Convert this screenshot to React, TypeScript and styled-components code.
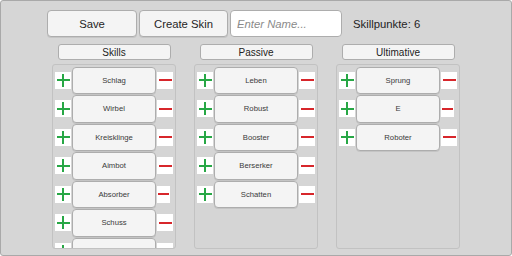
import React from "react";
import styled, { createGlobalStyle } from "styled-components";

const Global = createGlobalStyle`
  html, body { margin: 0; padding: 0; background: #ffffff; }
  body { font-family: "Liberation Sans", Arial, sans-serif; }
  * { box-sizing: border-box; }
`;

const Frame = styled.div`
  width: 512px;
  height: 256px;
  background: #d6d6d6;
  border: 1px solid #a9a9a9;
  border-radius: 3px;
  padding: 9px 0 0 46px;
  overflow: hidden;
`;

const TopBar = styled.div`
  display: flex;
  align-items: center;
  gap: 2px;
  height: 27px;
`;

const ActionButton = styled.button<{ $w: number }>`
  width: ${(p) => p.$w}px;
  height: 27px;
  padding: 0;
  background: #f4f4f4;
  border: 1px solid #adadad;
  border-radius: 4px;
  box-shadow: 0 1px 0 rgba(0, 0, 0, 0.08);
  font-family: "Liberation Sans", Arial, sans-serif;
  font-size: 11.3px;
  color: #1f1f1f;
`;

const NameInput = styled.input`
  width: 112px;
  height: 27px;
  padding: 0 0 0 6px;
  background: #ffffff;
  border: 1px solid #adadad;
  border-radius: 4px;
  font-family: "Liberation Sans", Arial, sans-serif;
  font-size: 11.3px;
  color: #222;
  outline: none;
  &::placeholder {
    color: #8a8a8a;
    font-style: italic;
  }
`;

const Points = styled.span`
  margin-left: 9px;
  font-size: 11.3px;
  color: #1f1f1f;
`;

const Columns = styled.div`
  display: flex;
  gap: 18px;
  margin: 7px 0 0 5px;
`;

const Column = styled.div`
  width: 124px;
  display: flex;
  flex-direction: column;
  align-items: center;
`;

const Header = styled.div`
  width: 113px;
  height: 16px;
  background: #f4f4f4;
  border: 1px solid #adadad;
  border-radius: 3px;
  display: flex;
  align-items: center;
  justify-content: center;
  font-size: 10px;
  color: #222;
`;

const Panel = styled.div`
  width: 124px;
  height: 185px;
  margin-top: 4px;
  padding: 1px 2px;
  border: 1px solid #c2c2c2;
  border-radius: 3px;
  background: #d5d5d5;
  overflow: hidden;
`;

const Row = styled.div`
  height: 28.5px;
  display: flex;
  align-items: center;
  gap: 1px;
`;

const SideBox = styled.div<{ $w: number }>`
  width: ${(p) => p.$w}px;
  height: 17px;
  margin-right: ${(p) => 16 - p.$w}px;
  background: #ffffff;
  display: flex;
  align-items: center;
  justify-content: center;
  flex-shrink: 0;
`;

const PlusSign = styled.span`
  position: relative;
  width: 13px;
  height: 13px;
  &::before, &::after {
    content: "";
    position: absolute;
    background: #27a745;
  }
  &::before { left: 0; top: 5.5px; width: 13px; height: 2px; }
  &::after { left: 5.5px; top: 0; width: 2px; height: 13px; }
`;

const MinusSign = styled.span<{ $w: number }>`
  width: ${(p) => p.$w}px;
  height: 2px;
  background: #d7262b;
`;

const SkillButton = styled.button`
  width: 84px;
  height: 27.5px;
  flex-shrink: 0;
  padding: 0;
  background: #f4f4f4;
  border: 1px solid #adadad;
  border-radius: 4px;
  box-shadow: 0 1px 0 rgba(0, 0, 0, 0.08);
  font-family: "Liberation Sans", Arial, sans-serif;
  font-size: 7.7px;
  color: #3a3a3a;
`;

type Skill = { name: string; narrow?: boolean };

const groups: { title: string; skills: Skill[] }[] = [
  {
    title: "Skills",
    skills: [
      { name: "Schlag" },
      { name: "Wirbel" },
      { name: "Kreisklinge" },
      { name: "Aimbot" },
      { name: "Absorber", narrow: true },
      { name: "Schuss" },
      { name: "Scheibe" },
    ],
  },
  {
    title: "Passive",
    skills: [
      { name: "Leben" },
      { name: "Robust" },
      { name: "Booster" },
      { name: "Berserker" },
      { name: "Schatten" },
    ],
  },
  {
    title: "Ultimative",
    skills: [{ name: "Sprung" }, { name: "E", narrow: true }, { name: "Roboter" }],
  },
];

function SkillRow({ skill }: { skill: Skill }) {
  return (
    <Row>
      <SideBox $w={16}>
        <PlusSign />
      </SideBox>
      <SkillButton>{skill.name}</SkillButton>
      <SideBox $w={skill.narrow ? 13 : 16}>
        <MinusSign $w={skill.narrow ? 11 : 13} />
      </SideBox>
    </Row>
  );
}

export default function App() {
  return (
    <>
      <Global />
      <Frame>
        <TopBar>
          <ActionButton $w={90}>Save</ActionButton>
          <ActionButton $w={89}>Create Skin</ActionButton>
          <NameInput placeholder="Enter Name..." />
          <Points>Skillpunkte: 6</Points>
        </TopBar>
        <Columns>
          {groups.map((g) => (
            <Column key={g.title}>
              <Header>{g.title}</Header>
              <Panel>
                {g.skills.map((s) => (
                  <SkillRow key={s.name} skill={s} />
                ))}
              </Panel>
            </Column>
          ))}
        </Columns>
      </Frame>
    </>
  );
}
